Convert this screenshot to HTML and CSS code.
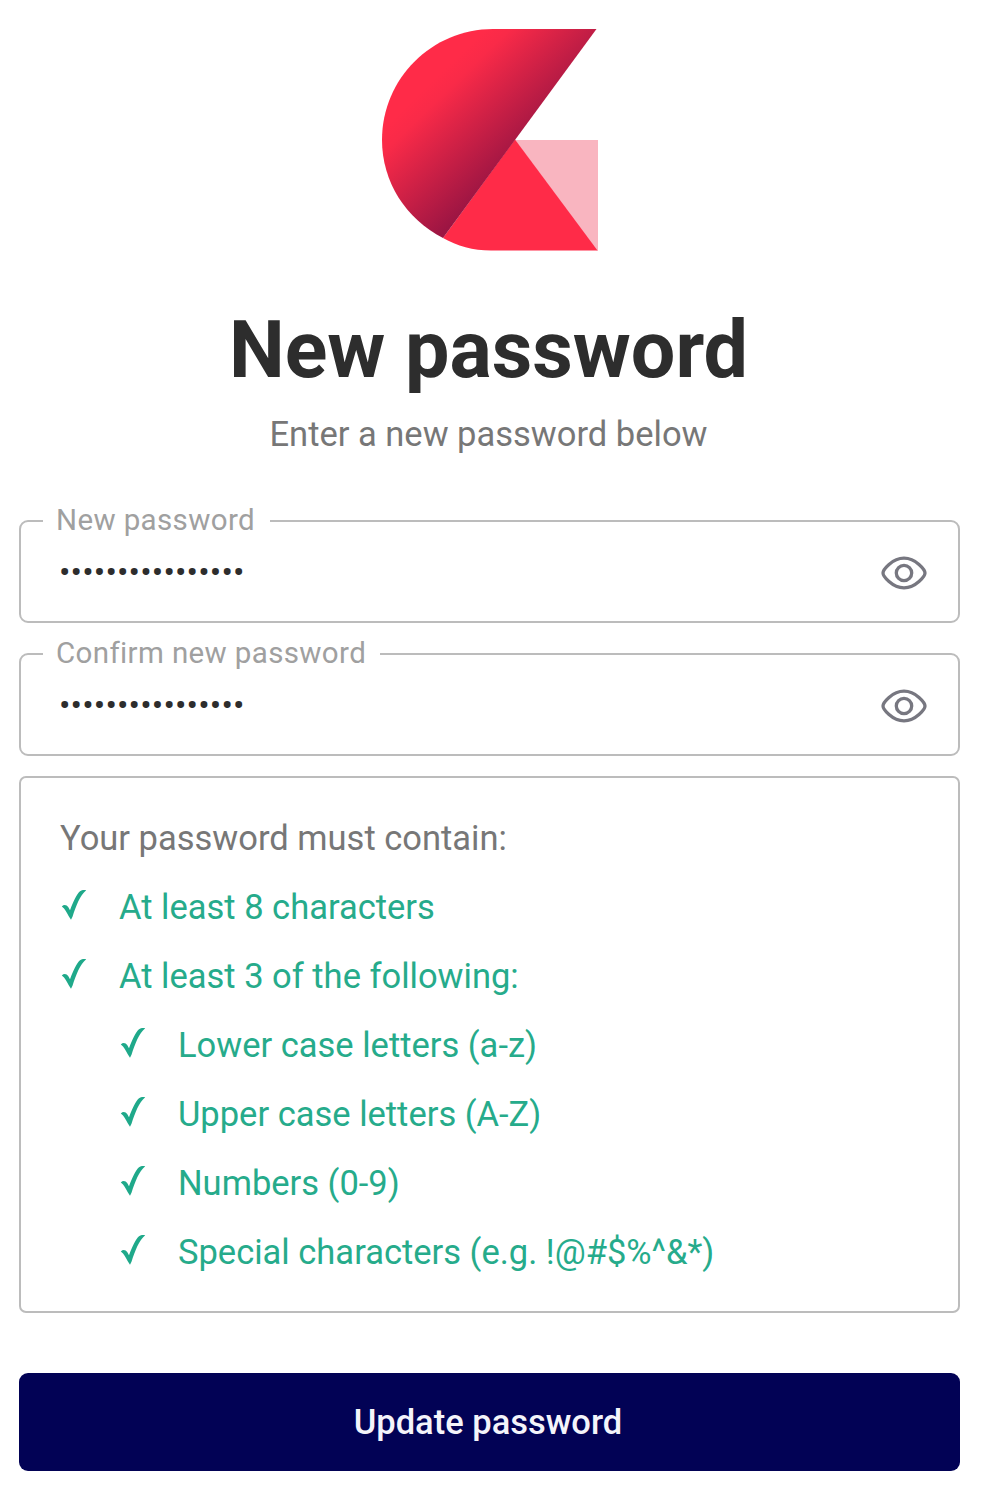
FILE: index.html
```html
<!DOCTYPE html>
<html lang="en">
<head>
<meta charset="utf-8">
<title>New password</title>
<link rel="stylesheet" href="styles.css">
</head>
<body>
<svg class="defs" width="0" height="0" aria-hidden="true">
  <symbol id="eye" viewBox="0 0 46 36"><path d="M2 18C2 15 11 3.200 23 3.200S44 15 44 18 35 32.800 23 32.800 2 21 2 18Z"/><circle cx="23" cy="18" r="7.700"/></symbol>
  <symbol id="check" viewBox="0 0 26 32"><path d="M.8 17.400C3 15.300 5.600 15.700 7.200 18.100L9 21.200C12.600 12 15.500 5.500 19 2.300 21 .7 23.500 .6 25.200 1.300 19 6.500 15 17 11.600 27.500L10 30.700 7.600 27C5.800 23.600 4.200 19.800 .8 17.400Z"/></symbol>
</svg>
<main class="page">
  <svg class="logo" viewBox="0 0 218 224" aria-label="Logo">
    <defs>
      <linearGradient id="fold" gradientUnits="userSpaceOnUse" x1="44" y1="60" x2="125" y2="143">
        <stop offset="0" stop-color="#ff2b48"/><stop offset=".15" stop-color="#f92a48"/><stop offset="1" stop-color="#9c1543"/>
      </linearGradient>
    </defs>
    <path fill="#f9b5c0" d="M134 112H217V223L215 222Z"/>
    <path fill="#ff2b48" d="M134 111.500 216.500 222.500H110C92 222.500 76 218 62 210Z"/>
    <path fill="url(#fold)" d="M215.500 1H112C51 1 1 50.500 1 112 1 154 25 191 62 210Z"/>
  </svg>
  <h1 class="title">New password</h1>
  <p class="subtitle">Enter a new password below</p>
  <form class="form">
    <fieldset class="field">
      <legend class="label label-new">New password</legend>
      <div class="row"><span class="dots">••••••••••••••••</span><svg class="eye"><use href="#eye"/></svg></div>
    </fieldset>
    <fieldset class="field">
      <legend class="label label-confirm">Confirm new password</legend>
      <div class="row"><span class="dots">••••••••••••••••</span><svg class="eye"><use href="#eye"/></svg></div>
    </fieldset>
    <section class="rules">
      <p class="intro">Your password must contain:</p>
      <ul class="list">
        <li class="item"><svg class="check"><use href="#check"/></svg><span>At least 8 characters</span></li>
        <li class="item"><svg class="check"><use href="#check"/></svg><span>At least 3 of the following:</span></li>
        <li>
          <ul class="list nested">
            <li class="item"><svg class="check"><use href="#check"/></svg><span>Lower case letters (a-z)</span></li>
            <li class="item"><svg class="check"><use href="#check"/></svg><span>Upper case letters (A-Z)</span></li>
            <li class="item"><svg class="check"><use href="#check"/></svg><span>Numbers (0-9)</span></li>
            <li class="item"><svg class="check"><use href="#check"/></svg><span>Special characters (e.g. !@#$%^&amp;*)</span></li>
          </ul>
        </li>
      </ul>
    </section>
    <button class="submit" type="button">Update password</button>
  </form>
</main>
</body>
</html>
```
FILE: styles.css
```css
* { box-sizing: border-box; }
body { margin: 0; background: #fff; font-family: Roboto, "Liberation Sans", sans-serif; }
.defs { display: block; }
.page { width: 941px; height: 1494px; margin-left: 19px; padding-top: 28px; display: flex; flex-direction: column; overflow: hidden; }
.logo { width: 218px; height: 224px; margin-left: 362px; flex: none; }
.title { margin: 51px 0 0; padding-right: 2px; height: 94px; line-height: 94px; font-size: 79px; font-weight: 700; color: #2d2d2d; text-align: center; }
.subtitle { margin: 17px 0 0; padding-right: 2px; height: 40px; line-height: 40px; font-size: 34.5px; color: #777; text-align: center; }
.form { margin-top: 49px; display: flex; flex-direction: column; }
.field { margin: 0 0 13px; padding: 0; min-width: 0; height: 120px; border: 2px solid #bcbcbc; border-radius: 9px; }
.label { margin-left: 22px; padding: 0 0 0 13px; height: 36px; line-height: 35px; font-size: 29.5px; letter-spacing: .37px; color: #a0a0a0; white-space: nowrap; }
.label-new { width: 227px; }
.label-confirm { width: 337px; }
.row { height: 66px; padding: 0 31px 0 38px; display: flex; align-items: center; justify-content: space-between; }
.dots { font-size: 34px; line-height: 40px; letter-spacing: .13px; color: #2d2d2d; }
.eye { width: 46px; height: 36px; margin-top: 1px; fill: none; stroke: #777780; stroke-width: 3.3; }
.rules { margin-top: 7px; height: 537px; padding: 26px 39px 0; border: 2px solid #bcbcbc; border-radius: 7px; font-size: 34.5px; line-height: 69px; }
.intro { margin: 0; color: #777; }
.list { margin: 0; padding: 0; list-style: none; color: #26ab8b; }
.nested { padding-left: 59px; }
.item { height: 69px; display: flex; align-items: center; gap: 32px; white-space: nowrap; }
.check { width: 26px; height: 32px; margin: -6px 0 0 1px; fill: #1fa98a; }
.submit { margin-top: 60px; height: 98px; padding: 0 3px 0 0; border: 0; border-radius: 9px; background: #020255; color: #f4f4fa; font: 500 34.5px Roboto, sans-serif; }
```
